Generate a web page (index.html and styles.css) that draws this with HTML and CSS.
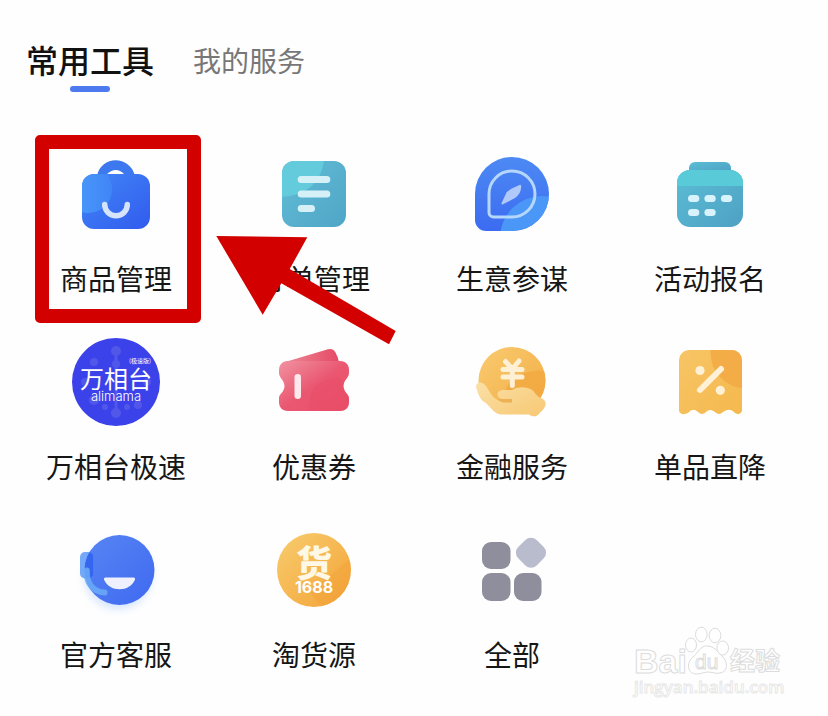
FILE: index.html
```html
<!DOCTYPE html>
<html lang="zh-CN">
<head>
<meta charset="utf-8">
<meta name="viewport" content="width=device-width, initial-scale=1">
<title>常用工具</title>
<link rel="stylesheet" href="styles.css">
</head>
<body>
<main class="panel">
  <nav class="tabs">
    <button class="tab tab-active" type="button">常用工具</button>
    <button class="tab" type="button">我的服务</button>
  </nav>

  <section class="grid">
    <a class="tool" href="#goods">
      <svg class="icon" viewBox="0 0 96 96" aria-hidden="true">
        <defs>
          <linearGradient id="bag" x1="0" y1="0" x2="1" y2="1"><stop offset="0" stop-color="#4287f6"/><stop offset="1" stop-color="#315bee"/></linearGradient>
          <linearGradient id="bagLight" x1="0" y1="0" x2="1" y2="0"><stop offset="0" stop-color="#4aa0fa"/><stop offset="1" stop-color="#4185f7"/></linearGradient>
          <clipPath id="bagClip"><rect x="14" y="28" width="68" height="55" rx="12"/></clipPath>
        </defs>
        <path d="M29 30C33 9 62 9 67 30L57 29Q48 19 38 29Z" fill="#3d78ee"/>
        <rect x="14" y="28" width="68" height="55" rx="12" fill="url(#bag)"/>
        <circle cx="20" cy="43" r="24" fill="url(#bagLight)" clip-path="url(#bagClip)"/>
        <path d="M36.7 58.5a11.3 11.3 0 0 0 22.6 0" fill="none" stroke="#d6e3fc" stroke-width="5.5" stroke-linecap="round"/>
      </svg>
      <span class="label">商品管理</span>
      <span class="frame"></span>
    </a>

    <a class="tool" href="#orders">
      <svg class="icon" viewBox="0 0 96 96" aria-hidden="true">
        <defs>
          <linearGradient id="doc" x1="0" y1="0" x2="1" y2="1"><stop offset="0" stop-color="#62bdd6"/><stop offset="1" stop-color="#4fa5c6"/></linearGradient>
          <clipPath id="docClip"><rect x="16" y="15" width="64" height="66" rx="12"/></clipPath>
        </defs>
        <rect x="16" y="15" width="64" height="66" rx="12" fill="url(#doc)"/>
        <path d="M16 15H58Q53 48 16 51Z" fill="#64cbdc" clip-path="url(#docClip)"/>
        <g fill="#d5f1f7"><rect x="31.700" y="30" width="32.600" height="7" rx="3.500"/><rect x="31.700" y="44.500" width="32.600" height="7" rx="3.500"/><rect x="31.700" y="59" width="17.300" height="7" rx="3.500"/></g>
      </svg>
      <span class="label">订单管理</span>
      <svg class="arrow" viewBox="0 0 180 110" aria-hidden="true"><path d="M.3 1L91.300 2.300L73.700 34L179.700 96L173 109.300L65.300 48.300L46.700 79.700Z" fill="#d30000"/></svg>
    </a>

    <a class="tool" href="#advisor">
      <svg class="icon" viewBox="0 0 96 96" aria-hidden="true">
        <defs>
          <linearGradient id="compass" x1="0" y1="0" x2="0" y2="1"><stop offset="0" stop-color="#4d8af4"/><stop offset="1" stop-color="#3c6bf0"/></linearGradient>
          <clipPath id="compassClip"><path d="M48 11a37 37 0 0 1 0 74H22a11 11 0 0 1-11-11V48A37 37 0 0 1 48 11Z"/></clipPath>
        </defs>
        <path d="M48 11a37 37 0 0 1 0 74H22a11 11 0 0 1-11-11V48A37 37 0 0 1 48 11Z" fill="url(#compass)"/>
        <circle cx="78" cy="92" r="42" fill="#4a97f7" clip-path="url(#compassClip)"/>
        <path d="M48 25a23 23 0 0 1 0 46H29.500a4.500 4.500 0 0 1-4.500-4.500V48A23 23 0 0 1 48 25Z" fill="none" stroke="#b5d7fb" stroke-width="3"/>
        <path d="M57 39.500Q58 47 51 52L38.500 58.600Q37 58.500 37.800 56.500L42.500 46.500Q44 44 55.500 39Q56.700 38.500 57 39.500Z" fill="#b0c8fa"/>
      </svg>
      <span class="label">生意参谋</span>
    </a>

    <a class="tool" href="#events">
      <svg class="icon" viewBox="0 0 96 96" aria-hidden="true">
        <defs>
          <linearGradient id="cal" x1="0" y1="0" x2="1" y2="1"><stop offset="0" stop-color="#5bbdd5"/><stop offset="1" stop-color="#4ea1c4"/></linearGradient>
          <clipPath id="calClip"><rect x="15" y="24" width="66" height="57" rx="13"/></clipPath>
        </defs>
        <path d="M27 26V22a6 6 0 0 1 6-6H63a6 6 0 0 1 6 6V26Z" fill="url(#cal)"/>
        <rect x="15" y="24" width="66" height="57" rx="13" fill="url(#cal)"/>
        <rect x="15" y="24" width="66" height="16" fill="#58cad8" clip-path="url(#calClip)"/>
        <g fill="#d8f3fb"><rect x="26" y="49" width="11.300" height="7" rx="3.500"/><rect x="42.400" y="49" width="11.300" height="7" rx="3.500"/><rect x="58.900" y="49" width="11.300" height="7" rx="3.500"/><rect x="26" y="63" width="11.300" height="7" rx="3.500"/><rect x="42.400" y="63" width="11.300" height="7" rx="3.500"/></g>
      </svg>
      <span class="label">活动报名</span>
    </a>

    <a class="tool" href="#wanxiang">
      <svg class="icon" viewBox="0 0 96 96" aria-hidden="true">
        <circle cx="48" cy="48" r="44" fill="#3c42e9"/>
        <g fill="#5157e8"><circle cx="48" cy="17" r="5"/><circle cx="48" cy="30" r="4"/><rect x="46.500" y="17" width="3" height="60"/><circle cx="26" cy="28" r="4"/><circle cx="26" cy="66" r="5"/><circle cx="70" cy="71" r="4"/><circle cx="48" cy="79" r="5"/><circle cx="17" cy="48" r="4"/><circle cx="79" cy="48" r="4"/><circle cx="37" cy="73" r="3"/><circle cx="59" cy="73" r="3"/></g>
        <text class="wx-name" x="48" y="54">万相台</text>
        <text class="wx-tag" x="72" y="29">(极速版)</text>
        <text class="wx-latin" x="48" y="67">alimama</text>
      </svg>
      <span class="label">万相台极速</span>
    </a>

    <a class="tool" href="#coupons">
      <svg class="icon" viewBox="0 0 96 96" aria-hidden="true">
        <defs>
          <linearGradient id="ticket" x1="0" y1="0" x2="1" y2="1"><stop offset="0" stop-color="#f093a1"/><stop offset=".5" stop-color="#ea5771"/><stop offset="1" stop-color="#ea4f68"/></linearGradient>
          <linearGradient id="ticketBack" x1="0" y1="0" x2="1" y2="0"><stop offset="0" stop-color="#ec8794"/><stop offset="1" stop-color="#e64a65"/></linearGradient>
        </defs>
        <path d="M19 28L62 15.300Q67 14 69.500 18.500Q72 23 73 28Z" fill="url(#ticketBack)"/>
        <path d="M22 27H74C80 27 83 31 83 36V39C83 44 77.500 46 77.500 52S83 60 83 64V68C83 74 79 77 74 77H22C16 77 13 73 13 68V64C13 60 18.500 58 18.500 52S13 44 13 39V36C13 31 16 27 22 27Z" fill="url(#ticket)"/>
        <path d="M43 77C42 57 51 46 69 44Q76 43 78 49Q75 55 83 64V68C83 74 79 77 74 77Z" fill="#e84b67" opacity=".4"/>
        <rect x="28.500" y="40" width="6.500" height="25" rx="3.200" fill="#fde8ed"/>
      </svg>
      <span class="label">优惠券</span>
    </a>

    <a class="tool" href="#finance">
      <svg class="icon" viewBox="0 0 96 96" aria-hidden="true">
        <defs>
          <linearGradient id="coin" x1="0" y1="0" x2="1" y2="1"><stop offset="0" stop-color="#f9cb70"/><stop offset="1" stop-color="#f2ab43"/></linearGradient>
          <linearGradient id="hand" x1="0" y1="0" x2="1" y2="1"><stop offset="0" stop-color="#fae0a6"/><stop offset="1" stop-color="#f7c873"/></linearGradient>
          <clipPath id="coinClip"><circle cx="48" cy="46.500" r="33.500"/></clipPath>
        </defs>
        <circle cx="48" cy="46.500" r="33.500" fill="url(#coin)"/>
        <path d="M40 60Q48 34 82 37V70H40Z" fill="#f2a73d" opacity=".7" clip-path="url(#coinClip)"/>
        <path d="M41.500 27.500L48.300 35L55 27M39 35.500H58M39 43H58M48.300 35V51.500" fill="none" stroke="#fdf0d4" stroke-width="5" stroke-linecap="round" stroke-linejoin="round"/>
        <path d="M12 53C12 48 17 47 21 51C25 55 27 63 33 65.500L48 67V65H38C32 65 32 56 38 56H48C55 52 63 53 68 56C71 58 72 62 77 64C81 66 82 68 81.500 71C80 76 77 77 75 80C72 84 67 82 65 80.500H37C31 80 27 74 22 69C16 66 15 62 12 53Z" fill="url(#hand)"/>
        <path d="M33 65H48V68.500H39Q35 68 33 65Z" fill="#eeb153"/>
      </svg>
      <span class="label">金融服务</span>
    </a>

    <a class="tool" href="#discount">
      <svg class="icon" viewBox="0 0 96 96" aria-hidden="true">
        <defs>
          <linearGradient id="tag" x1="0" y1="0" x2="1" y2="1"><stop offset="0" stop-color="#f7c566"/><stop offset="1" stop-color="#f5b84d"/></linearGradient>
          <clipPath id="tagClip"><path d="M27 16H70A10 10 0 0 1 80 26V77Q78 82 73 79Q68 73 61 78Q57 82 53 78Q48 74 44 78Q40 82 36 78Q31 73 26 79Q19 82 17 77V26A10 10 0 0 1 27 16Z"/></clipPath>
        </defs>
        <g clip-path="url(#tagClip)">
          <rect x="16" y="15" width="65" height="67" fill="url(#tag)"/>
          <circle cx="84" cy="19" r="35.500" fill="#f2a842" opacity=".8"/>
        </g>
        <g fill="#fff1d6"><circle cx="38" cy="36.500" r="4.600"/><circle cx="58.300" cy="56.300" r="4.600"/></g>
        <path d="M59 35L38 56" stroke="#fff1d6" stroke-width="6" stroke-linecap="round"/>
      </svg>
      <span class="label">单品直降</span>
    </a>

    <a class="tool" href="#support">
      <svg class="icon" viewBox="0 0 96 96" aria-hidden="true">
        <defs>
          <linearGradient id="face" x1="0" y1="0" x2="1" y2="1"><stop offset="0" stop-color="#5786f3"/><stop offset="1" stop-color="#3f69f1"/></linearGradient>
          <filter id="glow" x="-30%" y="-30%" width="160%" height="160%"><feGaussianBlur stdDeviation="4"/></filter>
          <clipPath id="faceClip"><circle cx="51.500" cy="48" r="35"/></clipPath>
        </defs>
        <circle cx="50" cy="53" r="34" fill="#b9d3fb" opacity=".6" filter="url(#glow)"/>
        <circle cx="51.500" cy="48" r="35" fill="url(#face)"/>
        <rect x="12" y="30" width="13.500" height="26.500" rx="5" fill="#73a9f7"/>
        <rect x="12" y="30" width="13.500" height="26.500" rx="5" fill="#3566ef" clip-path="url(#faceClip)"/>
        <path d="M18.800 48.500C18 61 25 70 36.500 70.500" fill="none" stroke="#6bacf8" stroke-width="6" stroke-linecap="round" opacity=".85"/>
        <path d="M37.500 55.500H65.500Q67.500 55.500 67 57.500C62 70.500 41 70.500 36 57.500Q35.500 55.500 37.500 55.500Z" fill="#eef1fd"/>
      </svg>
      <span class="label">官方客服</span>
    </a>

    <a class="tool" href="#source">
      <svg class="icon" viewBox="0 0 96 96" aria-hidden="true">
        <defs>
          <linearGradient id="huo" x1="0" y1="0" x2="1" y2="1"><stop offset="0" stop-color="#f8cc6d"/><stop offset="1" stop-color="#f3a338"/></linearGradient>
          <clipPath id="huoClip"><circle cx="48" cy="48" r="37"/></clipPath>
        </defs>
        <circle cx="48" cy="48" r="37" fill="url(#huo)"/>
        <path d="M44 70L86 35V90H60Z" fill="#f19c31" opacity=".3" clip-path="url(#huoClip)"/>
        <text class="huo-char" x="48" y="55">货</text>
        <text class="huo-num" x="48" y="71">1688</text>
      </svg>
      <span class="label">淘货源</span>
    </a>

    <a class="tool" href="#all">
      <svg class="icon" viewBox="0 0 96 96" aria-hidden="true">
        <g fill="#8e8e9c"><rect x="18" y="20" width="28.500" height="27" rx="9"/><rect x="18" y="51" width="28.500" height="28" rx="9"/><rect x="50" y="51" width="27.500" height="28" rx="9"/></g>
        <rect x="54" y="17.700" width="26" height="26" rx="8" fill="#b8bccd" transform="rotate(45 67 30.700)"/>
      </svg>
      <span class="label">全部</span>
    </a>
  </section>

  <svg class="watermark" viewBox="0 0 156 80" aria-hidden="true">
    <text class="wm-bai" x="2" y="47">Bai</text>
    <g class="wm-line"><ellipse cx="59" cy="19" rx="5.500" ry="7"/><ellipse cx="69.300" cy="8.500" rx="5.800" ry="7.300"/><ellipse cx="83" cy="9.500" rx="5.800" ry="7.300"/><ellipse cx="90.700" cy="22" rx="5.800" ry="7"/><path d="M75 20C68 20 66 27 61 31C54 37 55 48 65 48C69 48 72 46 76 46S84 48 88 47C96 46 96 36 91 31C85 26 83 20 75 20Z"/></g>
    <text class="wm-du" x="63" y="43">du</text>
    <text class="wm-cjk" x="98" y="44">经验</text>
    <text class="wm-url" x="2" y="67">jingyan.baidu.com</text>
  </svg>
</main>
</body>
</html>
```
FILE: styles.css
```css
* {
  box-sizing: border-box;
}

body {
  margin: 0;
  background: #fefefe;
  color: #161616;
  font-family: "Noto Sans CJK SC", "Noto Sans", sans-serif;
}

.panel {
  position: relative;
  min-height: 100vh;
  padding: 38px 19px 24px 17px;
}

.tabs {
  display: flex;
  align-items: flex-start;
  gap: 39px;
  margin-bottom: 54px;
  padding-left: 9px;
}

.tab {
  padding: 0;
  border: 0;
  background: none;
  color: #777;
  font-family: inherit;
  font-size: 28px;
  line-height: 44px;
  cursor: pointer;
}

.tab-active {
  color: #111;
  font-size: 32px;
  font-weight: 500;
  line-height: 42px;
}

.tab-active::after {
  content: "";
  display: block;
  width: 40px;
  height: 6px;
  margin: 6px auto 0;
  border-radius: 3px;
  background: #4e7af0;
}

.grid {
  display: grid;
  grid-template-columns: repeat(4, 1fr);
  row-gap: 36px;
}

.tool {
  position: relative;
  display: flex;
  flex-direction: column;
  align-items: center;
  gap: 16px;
  color: inherit;
  text-decoration: none;
}

.icon {
  width: 96px;
  height: 96px;
}

.label {
  font-size: 28px;
  line-height: 40px;
  white-space: nowrap;
}

.frame {
  position: absolute;
  top: -11px;
  left: 50%;
  width: 166px;
  height: 188px;
  margin-left: -81px;
  border: 14px solid #d30000;
  border-radius: 5px;
}

.arrow {
  position: absolute;
  z-index: 1;
  top: 89px;
  left: 50%;
  width: 180px;
  height: 110px;
  margin-left: -98px;
}

.wx-name,
.wx-tag,
.wx-latin,
.huo-char,
.huo-num {
  fill: #fff;
  text-anchor: middle;
}

.wx-name {
  font-size: 24px;
}

.wx-tag {
  font-size: 6px;
}

.wx-latin {
  font-family: Inter, sans-serif;
  font-size: 13px;
  font-weight: 300;
}

.huo-char {
  fill: #fff8e6;
  font-size: 36px;
  font-weight: 900;
}

.huo-num {
  font-family: Inter, sans-serif;
  font-size: 16px;
  font-weight: 700;
}

.watermark {
  position: absolute;
  right: 40px;
  bottom: 10px;
  width: 156px;
  height: 80px;
  overflow: visible;
  fill: #fff;
  stroke: #dcdcdc;
  stroke-width: 1;
}

.wm-bai {
  font-family: "Liberation Sans", sans-serif;
  font-size: 34px;
  font-weight: 700;
}

.wm-du {
  font-family: "Liberation Sans", sans-serif;
  font-size: 21px;
}

.wm-cjk {
  font-size: 25px;
  font-weight: 700;
}

.wm-url {
  font-family: "Open Sans", sans-serif;
  font-size: 17px;
  font-weight: 600;
  stroke: #e8e8e8;
}
```
